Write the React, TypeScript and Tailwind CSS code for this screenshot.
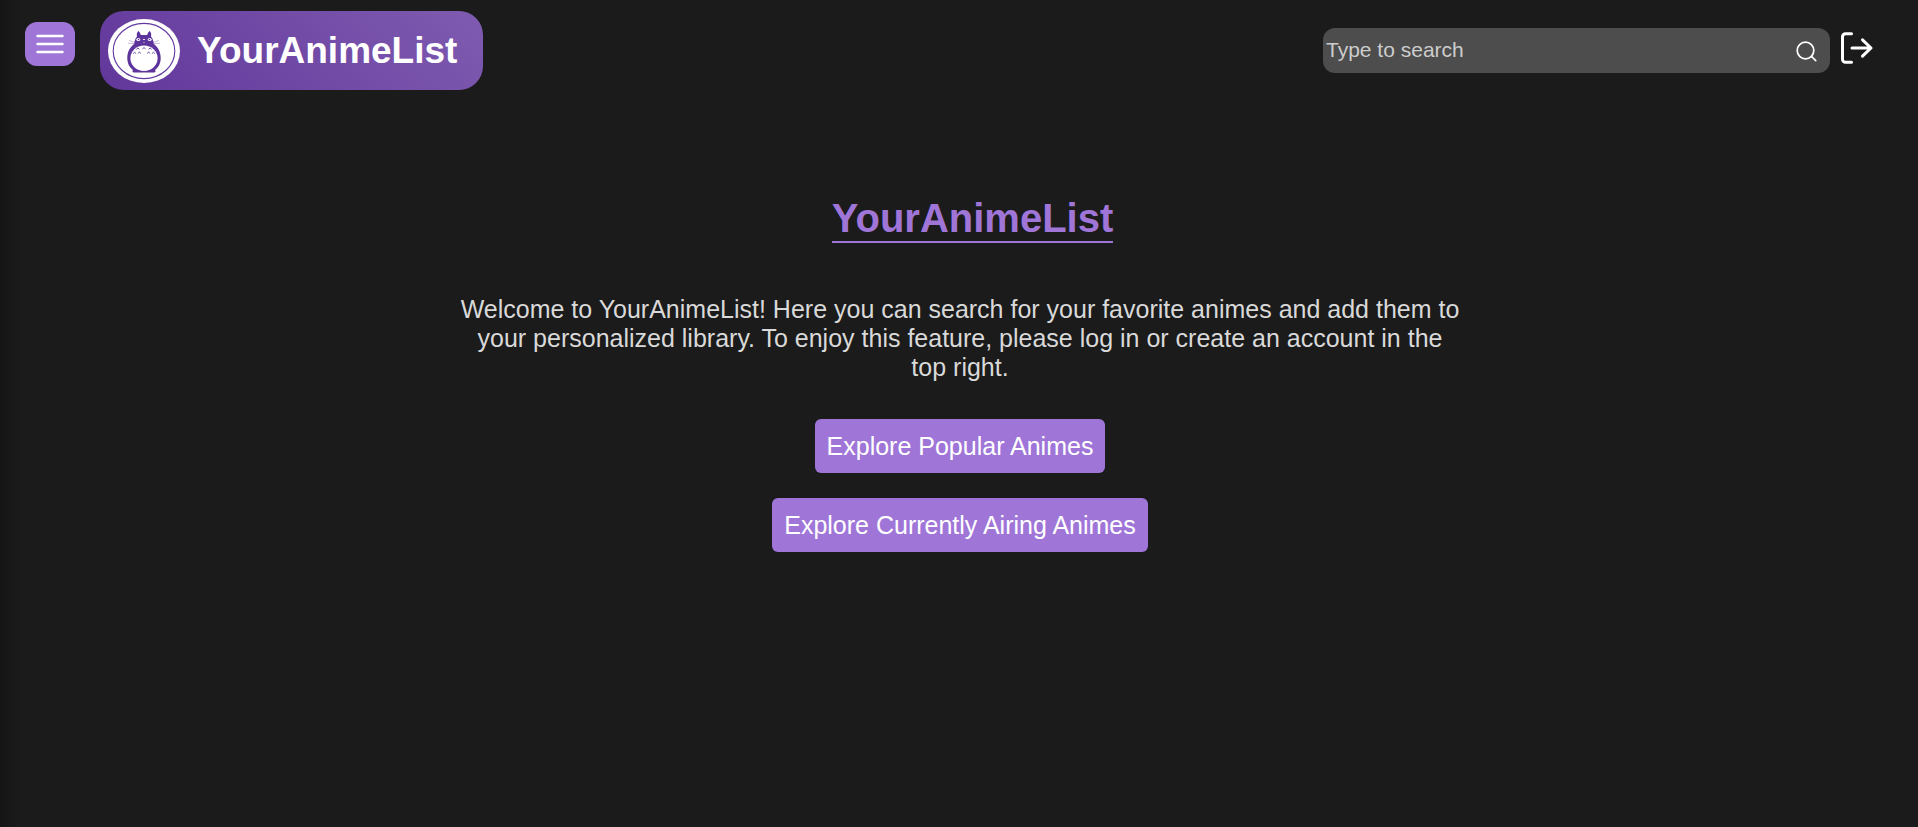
import { useState } from "react";

function MascotBadge() {
  return (
    <svg viewBox="0 0 72 64" className="h-16 w-18 shrink-0" aria-hidden="true">
      <ellipse cx="36" cy="32" rx="36" ry="32" fill="#fff" />
      <ellipse cx="36" cy="32" rx="30.8" ry="27.6" fill="none" stroke="#6239a0" strokeWidth="1.1" />
      <path
        fill="#5d349c"
        d="M29 17.500 C28.400 15.500 29 13.500 30.200 12 C31.600 13 32.600 14.500 32.800 16 H39.200 C39.400 14.500 40.400 13 41.800 12 C43 13.500 43.600 15.500 43 17.500 C44.800 19.500 45.400 22 46 25 C50.500 28.500 52.700 33.500 52.700 39 C52.700 44.500 50.500 48.500 47 51 C48 52 47.500 53.500 46 53.500 H26 C24.500 53.500 24 52 25 51 C21.500 48.500 19.300 44.500 19.300 39 C19.300 33.500 21.500 28.500 26 25 C26.600 22 27.200 19.500 29 17.500 Z"
      />
      <ellipse cx="36" cy="39.200" rx="13.600" ry="12.700" fill="#fff" />
      <g fill="#fff">
        <ellipse cx="30.300" cy="20.500" rx="2" ry="1.500" />
        <ellipse cx="41.700" cy="20.500" rx="2" ry="1.500" />
        <ellipse cx="36" cy="20.500" rx="1.200" ry=".5" />
        <circle cx="36" cy="23.600" r=".5" />
      </g>
      <circle cx="30.500" cy="20.500" r=".8" fill="#5d349c" />
      <circle cx="41.500" cy="20.500" r=".8" fill="#5d349c" />
      <g fill="none" stroke="#5d349c" strokeWidth=".9">
        <path d="M28.400 30.300l1.500-1.300 1.500 1.300M34.500 29.800l1.500-1.200 1.500 1.200M40.600 30.300l1.500-1.300 1.500 1.300" />
        <path d="M25.100 34.600l1.500-1.300 1.500 1.300M29.900 34.400l1.500-1.300 1.500 1.300M39.100 34.400l1.500-1.300 1.500 1.300M43.900 34.600l1.500-1.300 1.500 1.300" />
      </g>
      <path
        fill="none"
        stroke="#a58cc9"
        strokeWidth=".6"
        d="M21 21.500l6 2M20 24.300l6.500.2M51 21.500l-6 2M52 24.300l-6.500.2"
      />
    </svg>
  );
}

function Header() {
  const [query, setQuery] = useState("");
  return (
    <header className="flex items-start pt-[11px] pr-11 pl-[25px]">
      <button
        type="button"
        aria-label="Open menu"
        className="mt-[11px] flex h-11 w-[50px] items-center justify-center rounded-xl bg-[#9f76d8]"
      >
        <svg viewBox="0 0 28 20" className="h-5 w-7" stroke="#fff" strokeWidth="2.4" strokeLinecap="round" aria-hidden="true">
          <path d="M1.500 2h25M1.500 10h25M1.500 18h25" />
        </svg>
      </button>
      <a
        href="#home"
        className="ml-[25px] flex h-[79px] items-center gap-[17px] rounded-3xl bg-linear-45 from-[#62379b] to-[#7f5bb0] pr-[26px] pl-2"
      >
        <MascotBadge />
        <span className="text-[37px] leading-none font-bold text-white">YourAnimeList</span>
      </a>
      <div className="mt-[17px] ml-auto flex items-start gap-2">
        <form
          role="search"
          onSubmit={(e) => e.preventDefault()}
          className="flex h-[45px] w-[507px] items-center rounded-xl bg-[#4d4d4d] pr-3 pl-[3px]"
        >
          <input
            type="text"
            aria-label="Search animes"
            placeholder="Type to search"
            value={query}
            onChange={(e) => setQuery(e.target.value)}
            className="min-w-0 flex-1 bg-transparent pb-0.5 text-[21px] leading-6 text-white outline-none placeholder:text-[#cccccc]"
          />
          <button type="submit" aria-label="Search">
            <svg viewBox="0 0 24 24" className="size-6" fill="none" stroke="#fff" strokeWidth="1.700" strokeLinecap="round" aria-hidden="true">
              <circle cx="11.500" cy="11.500" r="8.300" />
              <path d="M17.700 17.700l4 4" />
            </svg>
          </button>
        </form>
        <button type="button" aria-label="Log out">
          <svg
            viewBox="0 0 36 40"
            className="h-10 w-9"
            fill="none"
            stroke="#fff"
            strokeWidth="3"
            strokeLinecap="round"
            strokeLinejoin="round"
            aria-hidden="true"
          >
            <path d="M13.500 5.800H7.500a3 3 0 0 0-3 3v22.500a3 3 0 0 0 3 3h6" />
            <path d="M14 20h19M24.500 11.800l8.500 8.200-8.500 8.200" />
          </svg>
        </button>
      </div>
    </header>
  );
}

export default function App() {
  return (
    <div className="min-h-screen bg-[#1b1b1b] bg-linear-to-r from-[#151515] to-[#1b1b1b] to-[20px] font-['Liberation_Sans',Arial,sans-serif]">
      <Header />
      <main className="flex flex-col items-center pt-[106px] pr-6 pl-[26px] text-center text-[25px] leading-[29px]">
        <h1 className="ml-[25px] border-b-2 border-[#9f76d8] text-[40px] leading-[45px] font-bold text-[#9f76d8]">
          YourAnimeList
        </h1>
        <p className="mt-[52px] max-w-[1000px] text-[#d9d9d9]">
          Welcome to YourAnimeList! Here you can search for your favorite animes and add them to your personalized
          library. To enjoy this feature, please log in or create an account in the top right.
        </p>
        <div className="mt-[37px] flex flex-col items-center gap-[25px]">
          <a href="#popular" className="flex h-[54px] items-center rounded-md bg-[#9f76d8] px-3 text-white">
            Explore Popular Animes
          </a>
          <a href="#airing" className="flex h-[54px] items-center rounded-md bg-[#9f76d8] px-3 text-white">
            Explore Currently Airing Animes
          </a>
        </div>
      </main>
    </div>
  );
}
